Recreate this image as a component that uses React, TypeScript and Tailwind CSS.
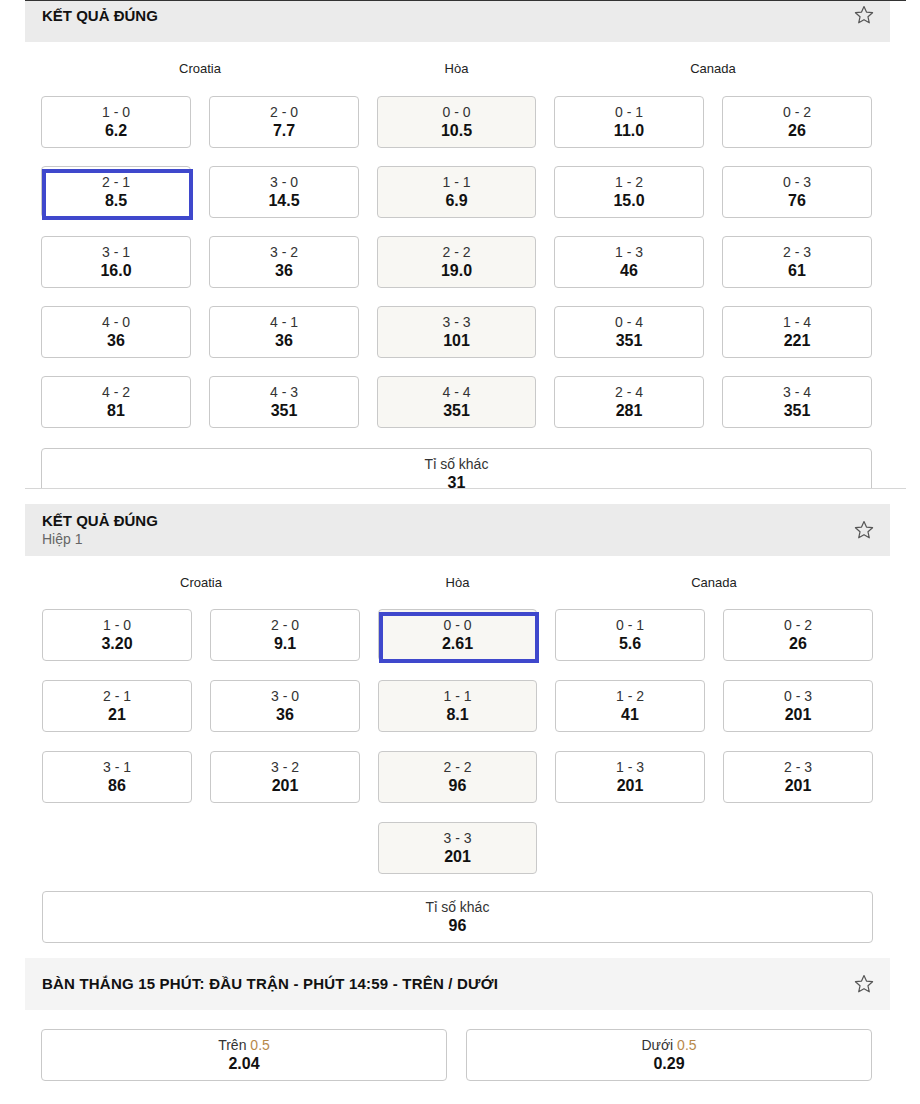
import React from 'react';

type Cell = { score: string; odd: string; draw?: boolean; selected?: boolean } | null;

const fullTime: Cell[][] = [
  [{ score: '1 - 0', odd: '6.2' }, { score: '2 - 0', odd: '7.7' }, { score: '0 - 0', odd: '10.5', draw: true }, { score: '0 - 1', odd: '11.0' }, { score: '0 - 2', odd: '26' }],
  [{ score: '2 - 1', odd: '8.5', selected: true }, { score: '3 - 0', odd: '14.5' }, { score: '1 - 1', odd: '6.9', draw: true }, { score: '1 - 2', odd: '15.0' }, { score: '0 - 3', odd: '76' }],
  [{ score: '3 - 1', odd: '16.0' }, { score: '3 - 2', odd: '36' }, { score: '2 - 2', odd: '19.0', draw: true }, { score: '1 - 3', odd: '46' }, { score: '2 - 3', odd: '61' }],
  [{ score: '4 - 0', odd: '36' }, { score: '4 - 1', odd: '36' }, { score: '3 - 3', odd: '101', draw: true }, { score: '0 - 4', odd: '351' }, { score: '1 - 4', odd: '221' }],
  [{ score: '4 - 2', odd: '81' }, { score: '4 - 3', odd: '351' }, { score: '4 - 4', odd: '351', draw: true }, { score: '2 - 4', odd: '281' }, { score: '3 - 4', odd: '351' }],
];

const firstHalf: Cell[][] = [
  [{ score: '1 - 0', odd: '3.20' }, { score: '2 - 0', odd: '9.1' }, { score: '0 - 0', odd: '2.61', draw: true, selected: true }, { score: '0 - 1', odd: '5.6' }, { score: '0 - 2', odd: '26' }],
  [{ score: '2 - 1', odd: '21' }, { score: '3 - 0', odd: '36' }, { score: '1 - 1', odd: '8.1', draw: true }, { score: '1 - 2', odd: '41' }, { score: '0 - 3', odd: '201' }],
  [{ score: '3 - 1', odd: '86' }, { score: '3 - 2', odd: '201' }, { score: '2 - 2', odd: '96', draw: true }, { score: '1 - 3', odd: '201' }, { score: '2 - 3', odd: '201' }],
  [null, null, { score: '3 - 3', odd: '201', draw: true }, null, null],
];

const StarIcon = () => (
  <svg width="20" height="20" viewBox="0 0 20 20" fill="none">
    <polygon
      points="10,1.5 12.47,7.1 18.56,7.72 13.99,11.8 15.29,17.78 10,14.7 4.71,17.78 6.01,11.8 1.44,7.72 7.53,7.1"
      stroke="#555"
      strokeWidth="1.2"
      strokeLinejoin="round"
    />
  </svg>
);

const OddBox: React.FC<{ cell: NonNullable<Cell> }> = ({ cell }) => (
  <div
    className={`relative h-[52px] rounded-[4px] border border-[#c9c9c9] flex flex-col items-center justify-center ${
      cell.draw ? 'bg-[#f8f7f3]' : 'bg-white'
    }`}
  >
    <div className="text-[14px] leading-[17px] text-[#333]">{cell.score}</div>
    <div className="text-[16px] leading-[20px] font-bold text-[#111]">{cell.odd}</div>
    {cell.selected && (
      <div className="absolute top-[2px] left-[0px] right-[-3px] bottom-[-3px] border-[4px] border-[#3f48cc]" />
    )}
  </div>
);

const TeamLabels: React.FC<{ h: string }> = ({ h }) => (
  <div className={`grid grid-cols-[318px_159px_318px] gap-x-[18px] items-center text-[13px] text-[#222] ${h}`}>
    <div className="text-center">Croatia</div>
    <div className="text-center">Hòa</div>
    <div className="text-center">Canada</div>
  </div>
);

const ScoreGrid: React.FC<{ rows: Cell[][]; gapY: string }> = ({ rows, gapY }) => (
  <div className={`grid grid-cols-[150px_150px_159px_150px_150px] gap-x-[18px] ${gapY}`}>
    {rows.flat().map((cell, i) => (cell ? <OddBox key={i} cell={cell} /> : <div key={i} />))}
  </div>
);

const OtherBox: React.FC<{ odd: string }> = ({ odd }) => (
  <div className="h-[52px] rounded-[4px] border border-[#c9c9c9] bg-white flex flex-col items-center justify-center">
    <div className="text-[14px] leading-[17px] text-[#333]">Tỉ số khác</div>
    <div className="text-[16px] leading-[20px] font-bold text-[#111]">{odd}</div>
  </div>
);

export default function App() {
  return (
    <div className="min-h-screen bg-white" style={{ fontFamily: '"Liberation Sans", Arial, sans-serif' }}>
      <div className="ml-[25px] w-[881px]">
        {/* Kết quả đúng - full time */}
        <div className="h-[488px] overflow-hidden border-t border-[#333]">
          <div className="w-[865px] h-[41px] bg-[#ebebeb] flex items-start justify-between pl-[17px] pr-[16px]">
            <div className="pt-[6px] text-[15px] leading-[18px] font-bold text-[#111]">KẾT QUẢ ĐÚNG</div>
            <div className="pt-[4px]">
              <StarIcon />
            </div>
          </div>
          <div className="w-[865px] pl-[16px] pr-[18px]">
            <TeamLabels h="h-[54px]" />
            <ScoreGrid rows={fullTime} gapY="gap-y-[18px]" />
            <div className="mt-[20px]">
              <OtherBox odd="31" />
            </div>
          </div>
        </div>

        {/* Kết quả đúng - hiệp 1 */}
        <div className="border-t border-[#d6d6d6] pt-[15px]">
          <div className="w-[865px] h-[52px] bg-[#ebebeb] flex items-center justify-between pl-[17px] pr-[16px]">
            <div>
              <div className="text-[15px] leading-[18px] font-bold text-[#111]">KẾT QUẢ ĐÚNG</div>
              <div className="text-[14px] leading-[18px] text-[#666]">Hiệp 1</div>
            </div>
            <StarIcon />
          </div>
          <div className="w-[865px] pl-[17px] pr-[17px]">
            <TeamLabels h="h-[53px]" />
            <ScoreGrid rows={firstHalf} gapY="gap-y-[19px]" />
            <div className="mt-[17px]">
              <OtherBox odd="96" />
            </div>
          </div>
        </div>

        {/* Bàn thắng 15 phút */}
        <div className="mt-[15px] w-[865px]">
          <div className="h-[52px] bg-[#f4f4f4] flex items-center justify-between pl-[17px] pr-[16px]">
            <div className="text-[15px] leading-[18px] font-bold tracking-[0.2px] text-[#111]">
              BÀN THẮNG 15 PHÚT: ĐẦU TRẬN - PHÚT 14:59 - TRÊN / DƯỚI
            </div>
            <StarIcon />
          </div>
          <div className="grid grid-cols-2 gap-x-[19px] pl-[16px] pr-[18px] mt-[19px]">
            {[
              { name: 'Trên', line: '0.5', odd: '2.04' },
              { name: 'Dưới', line: '0.5', odd: '0.29' },
            ].map((o) => (
              <div
                key={o.name}
                className="h-[52px] rounded-[4px] border border-[#c9c9c9] bg-white flex flex-col items-center justify-center"
              >
                <div className="text-[14px] leading-[17px] text-[#333]">
                  {o.name} <span className="text-[#b8894a]">{o.line}</span>
                </div>
                <div className="text-[16px] leading-[20px] font-bold text-[#111]">{o.odd}</div>
              </div>
            ))}
          </div>
        </div>
      </div>
    </div>
  );
}
